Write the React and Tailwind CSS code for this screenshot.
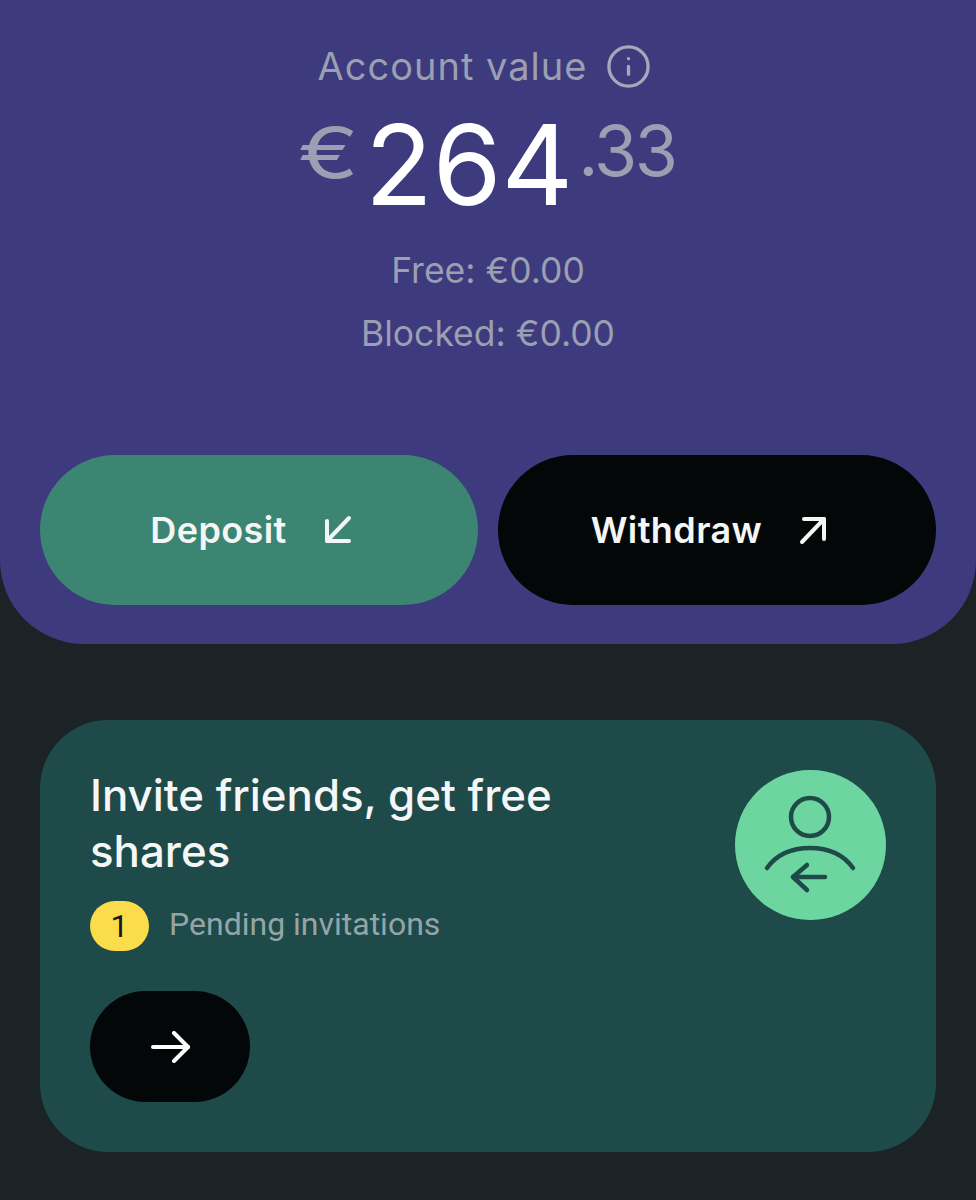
import { Info } from 'lucide-react'

function ActionButton({ label, className, children }) {
  return (
    <button className={`flex h-[150px] flex-1 items-center justify-center gap-[37px] rounded-full pr-[16px] text-[36px] font-semibold tracking-[0.4px] text-[#f4f6f6] ${className}`}>
      <span>{label}</span>
      {children}
    </button>
  )
}

function ArrowDownIn() {
  return (
    <svg width="28" height="30" viewBox="0 0 28 30" fill="none" stroke="currentColor" strokeWidth="4" strokeLinecap="round" strokeLinejoin="round">
      <path d="M25 3L3 26" />
      <path d="M3 6V26H25" />
    </svg>
  )
}

function ArrowUpOut() {
  return (
    <svg width="28" height="30" viewBox="0 0 28 30" fill="none" stroke="currentColor" strokeWidth="4" strokeLinecap="round" strokeLinejoin="round">
      <path d="M3 27L25 4" />
      <path d="M5 4H25V24" />
    </svg>
  )
}

function ArrowForward() {
  return (
    <svg width="42" height="32" viewBox="0 0 42 32" fill="none" stroke="currentColor" strokeWidth="4" strokeLinecap="round" strokeLinejoin="round">
      <path d="M4 16H39" />
      <path d="M25 2L39 16L25 30" />
    </svg>
  )
}

// person outline with a return arrow under the shoulders
function InviteIcon() {
  return (
    <svg width="151" height="150" viewBox="0 0 151 150" fill="none" stroke="#1f4a4a" strokeWidth="4.5" strokeLinecap="round" strokeLinejoin="round">
      <circle cx="75" cy="47" r="19" />
      <path d="M32 98C42 84 57 78 75 78C93 78 108 84 118 98" />
      <path d="M58 107H90" />
      <path d="M72 95L58 107L72 120" />
    </svg>
  )
}

export default function App() {
  return (
    <div className="h-[1200px] w-[976px] overflow-hidden bg-[#1b2326] font-['Inter',sans-serif]">
      <section className="flex h-[644px] flex-col items-center rounded-b-[84px] bg-[#3d3a7e] px-[40px] pt-[43px]">
        <div className="mr-[6px] flex h-[46px] items-center gap-[18px] text-[38px] tracking-[1px] text-[#9a9fb2]">
          <span>Account value</span>
          <Info size={47} strokeWidth={1.7} className="text-[#a3a8ba]" />
        </div>

        <div className="mt-[20px] flex h-[112px] items-start">
          <span className="ml-[12px] mr-[6px] mt-[4px] inline-block origin-right scale-x-[1.3] text-[70px] leading-[80px] text-[#9a9fb2]">€</span>
          <span className="text-[111px] leading-[111px] text-white">264</span>
          <span className="ml-[5px] mt-[2px] text-[70px] leading-[80px] tracking-[-2.5px] text-[#9a9fb2]">.33</span>
        </div>

        <p className="mt-[28px] text-[35.5px] leading-[44px] text-[#9a9fb2]">Free: €0.00</p>
        <p className="mt-[19px] text-[35.5px] leading-[44px] text-[#9a9fb2]">Blocked: €0.00</p>

        <div className="mt-[99px] flex w-full gap-[20px]">
          <ActionButton label="Deposit" className="bg-[#3d8573]">
            <ArrowDownIn />
          </ActionButton>
          <ActionButton label="Withdraw" className="bg-[#030708]">
            <ArrowUpOut />
          </ActionButton>
        </div>
      </section>

      <section className="mx-[40px] mt-[76px] flex h-[432px] justify-between rounded-[68px] bg-[#1f4a4a] pl-[50px] pr-[50px] pt-[48px]">
        <div>
          <h2 className="w-[500px] text-[43.8px] font-medium leading-[56px] text-[#f5f7f7]">
            Invite friends, get free shares
          </h2>
          <div className="mt-[20px] flex items-center gap-[20px]">
            <span className="flex h-[50px] w-[59px] items-center justify-center rounded-full bg-[#fbdc4a] font-['Roboto',sans-serif] text-[32px] text-[#14181a]">
              1
            </span>
            <span className="mb-[4px] font-['Roboto',sans-serif] text-[32px] text-[#94a5a8]">Pending invitations</span>
          </div>
          <button className="mt-[39px] flex h-[111px] w-[160px] items-center justify-center rounded-full bg-[#030708] text-white">
            <ArrowForward />
          </button>
        </div>
        <div className="mt-[2px] flex h-[150px] w-[151px] items-center justify-center rounded-full bg-[#6dd6a0]">
          <InviteIcon />
        </div>
      </section>
    </div>
  )
}
